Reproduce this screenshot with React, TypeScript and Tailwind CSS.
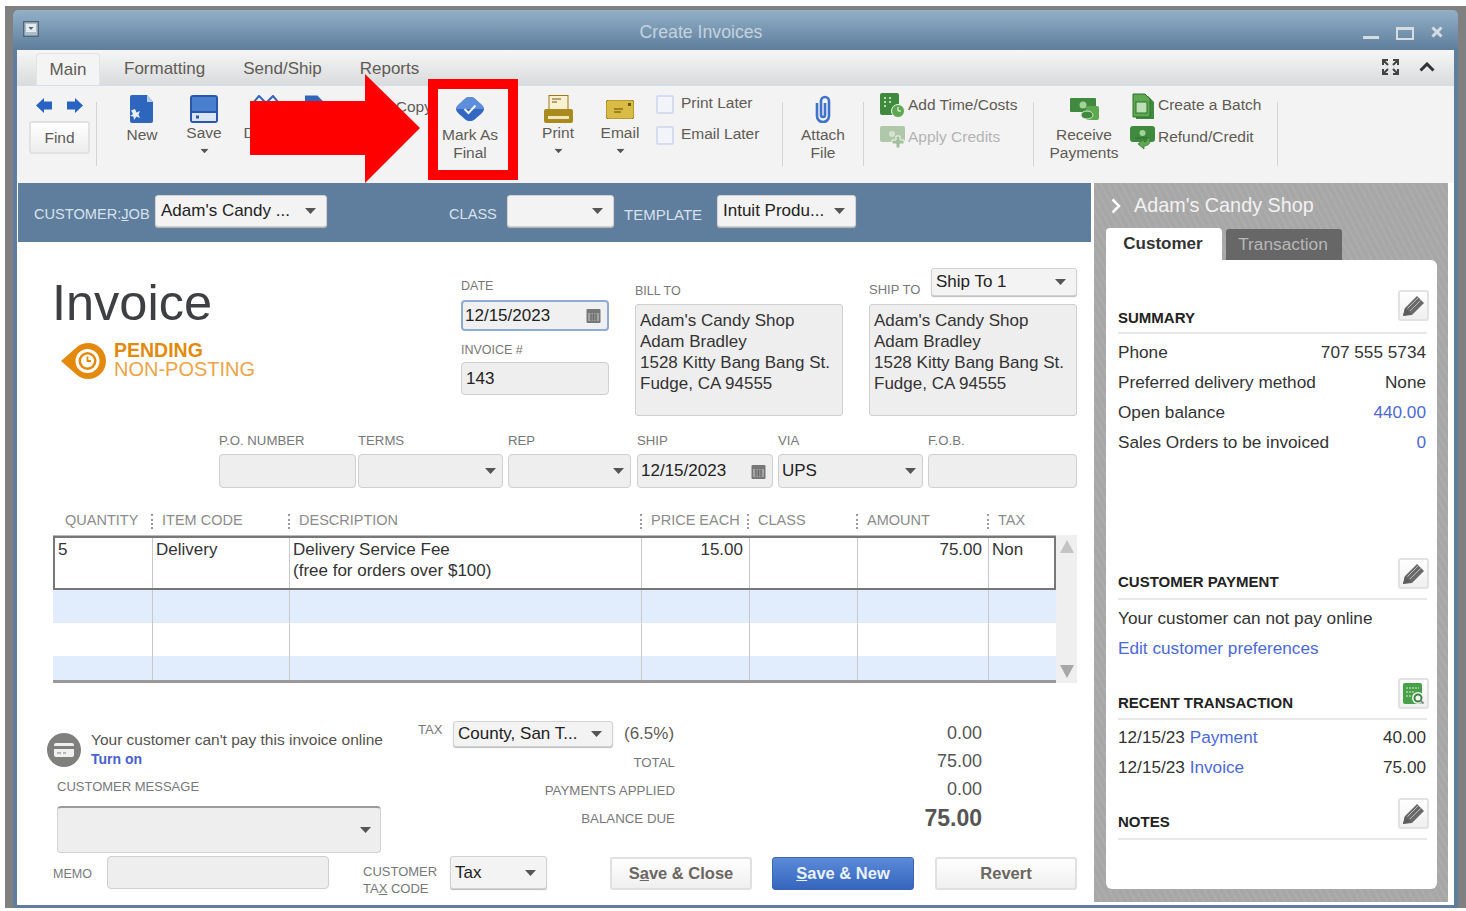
import type { ReactNode } from 'react';

function Caret({ className = '' }: { className?: string }) {
  return (
    <svg width="11" height="6" viewBox="0 0 11 6" className={className}>
      <path d="M0 0h11L5.5 6z" fill="#555" />
    </svg>
  );
}

function CalendarIcon() {
  return (
    <svg width="15" height="15" viewBox="0 0 15 15">
      <rect x="0.5" y="1" width="14" height="14" rx="1" fill="#777" />
      <rect x="2" y="5" width="11" height="8" fill="#a3a3a3" />
      <path d="M4 7h7M4 9h7M4 11h7M5 5v8M7.5 5v8M10 5v8" stroke="#666" strokeWidth="0.8" />
    </svg>
  );
}

function Pencil() {
  return (
    <svg width="24" height="23" viewBox="0 0 24 23">
      <path d="M1 22l2-8L15 2l7 7-12 12z" fill="#6a6a6a" />
      <path d="M5.5 14.5L16 4M8 17L18.5 6.5" stroke="#c4c4c4" strokeWidth="0.9" />
      <path d="M1 22l2-8 6 6z" fill="#5c5c5c" />
    </svg>
  );
}

function Select({ w, h, text, className = '', pl = 'pl-[5px]' }: { w: string; h: string; text?: string; className?: string; pl?: string }) {
  return (
    <div className={`${w} ${h} ${className} ${pl} flex items-center justify-between shrink-0 bg-[#f3f3f3] border border-[#d2d2d2] rounded-[3px] pr-[10px] text-[17px] text-[#222] shadow-[0_1px_1px_#bbb]`}>
      <span className="whitespace-nowrap">{text}</span>
      <Caret />
    </div>
  );
}

function ToolBtn({ icon, lines, w, ml, top = false, caret = false }: { icon: ReactNode; lines: string[]; w: string; ml: string; top?: boolean; caret?: boolean }) {
  return (
    <div className={`${w} ${ml} shrink-0 flex flex-col items-center pt-[9px]`}>
      <div className="h-[28px] flex items-center justify-center">{icon}</div>
      <div className={`${top ? 'mt-px' : 'mt-[3px]'} text-center leading-[18px] whitespace-nowrap`}>
        {lines.map((l) => (
          <div key={l}>{l}</div>
        ))}
      </div>
      {caret && <Caret className="mt-[6px] scale-75" />}
    </div>
  );
}

function Divider({ ml }: { ml: string }) {
  return <div className={`${ml} mt-[16px] h-[64px] w-px shrink-0 bg-[#d4d4d4]`} />;
}

function IconRow({ icon, text, dim = false }: { icon: ReactNode; text: string; dim?: boolean }) {
  return (
    <div className={`h-[26px] flex items-center gap-[3px] whitespace-nowrap ${dim ? 'text-[#b3b3b3]' : ''}`}>
      <div className="w-[25px] flex justify-center">{icon}</div>
      <span className="-mt-[2px]">{text}</span>
    </div>
  );
}

function Check({ text }: { text: string }) {
  return (
    <div className="h-[20px] flex items-center gap-[7px]">
      <div className="w-[18px] h-[19px] bg-[#f2f4fa] border-2 border-[#d5dcee] rounded-[2px]" />
      <span className="-mt-[3px]">{text}</span>
    </div>
  );
}

function Field({ label, w, ml, children }: { label: string; w: string; ml: string; children?: ReactNode }) {
  return (
    <div className={`${w} ${ml} shrink-0`}>
      <div className="h-[14px] leading-[14px] text-[13.2px] text-[#77787a]">{label}</div>
      <div className="mt-[6px] h-[34px] bg-[#eeeeee] border border-[#cfcfcf] rounded-[4px] flex items-center justify-between pl-[3px] pr-[6px] text-[17px] text-[#222]">
        {children}
      </div>
    </div>
  );
}

function HeadCell({ text, w, dots = true }: { text: string; w: string; dots?: boolean }) {
  return (
    <div className={`${w} shrink-0 flex items-center text-[14.5px] text-[#8b8b8b]`}>
      {dots && <div className="h-[15px] mr-[9px] border-l-2 border-dotted border-[#9a9a9a]" />}
      {text}
    </div>
  );
}

const cols = 'grid grid-cols-[100px_137px_352px_108px_108px_131px_67px]';

function EmptyRow({ h, bg }: { h: string; bg: string }) {
  return (
    <div className={`${cols} ${h} ${bg}`}>
      {[0, 1, 2, 3, 4, 5].map((i) => (
        <div key={i} className="border-r border-[#c9c9c9]" />
      ))}
      <div />
    </div>
  );
}

function TotalRow({ label, value, h = 'h-[28px]', big = false }: { label: string; value: string; h?: string; big?: boolean }) {
  return (
    <div className={`${h} flex items-center`}>
      <div className="w-[257px] text-right text-[13.3px] text-[#77787a] mt-[3px] whitespace-nowrap">{label}</div>
      <div className={`w-[307px] text-right text-[#555] ${big ? 'text-[23px] font-bold mt-[1px]' : 'text-[18px]'}`}>{value}</div>
    </div>
  );
}

function SideSection({ title, mt, titleMt, h, icon, children }: { title: string; mt: string; titleMt: string; h: string; icon: ReactNode; children?: ReactNode }) {
  return (
    <div className={mt}>
      <div className={`${h} flex items-start justify-between border-b-2 border-[#e8e8e8] mr-[2px]`}>
        <div className={`${titleMt} text-[15px] leading-[16px] font-bold text-[#222]`}>{title}</div>
        <div className="-mr-[2px] w-[31px] h-[31px] flex items-center justify-center rounded-[3px] border-2 border-[#e2e2e2] bg-gradient-to-b from-white to-[#efefef]">
          {icon}
        </div>
      </div>
      {children}
    </div>
  );
}

function SideRow({ children }: { children: ReactNode }) {
  return <div className="h-[30px] flex items-center justify-between pr-[3px] text-[17.2px] text-[#333]">{children}</div>;
}

const link = 'text-[#4c68d7]';

export default function App() {
  return (
    <div className="relative w-[1466px] h-[911px] bg-white overflow-hidden pt-[6px] pl-[5px] font-['Liberation_Sans',Arial,sans-serif] text-[15.5px] text-[#5f5b55]">
      <div className="h-[902px] bg-[#808080] pl-[8px] pr-[8px] pt-[4px]">
        <div className="h-[898px] rounded-t-[5px] bg-[#5f7d9c] px-[4px] pb-[3px] flex flex-col">
          {/* title bar */}
          <div className="-mx-[4px] h-[40px] shrink-0 rounded-t-[5px] bg-gradient-to-b from-[#92b0c8] to-[#5f7e9b] flex items-center pl-[10px] pr-[15px]">
            <svg width="16" height="16" viewBox="0 0 16 16" className="-mt-[2px]">
              <rect x="0.7" y="0.7" width="14.6" height="14.6" fill="#a9bccb" stroke="#4d6273" strokeWidth="1.3" />
              <rect x="3" y="3" width="10" height="8" fill="#e4eaee" />
              <path d="M5.5 6h5L8 9z" fill="#4d6273" />
            </svg>
            <div className="flex-1 text-center text-[17.7px] text-[#c4d3df] mt-[4px]">Create Invoices</div>
            <div className="w-[16px] h-[3px] bg-[#d5dde3] mt-[14px]" />
            <div className="ml-[17px] w-[18px] h-[13px] border-2 border-[#d5dde3] border-t-[3px] mt-[6px]" />
            <svg width="12" height="12" viewBox="0 0 12 12" className="ml-[17px] mt-[4px]">
              <path d="M1.5 1.5l9 9M10.5 1.5l-9 9" stroke="#d5dde3" strokeWidth="3" />
            </svg>
          </div>

          {/* ribbon tabs */}
          <div className="h-[35px] shrink-0 bg-gradient-to-b from-[#f6f6f6] to-[#d9dbdc] flex items-end pl-[19px] pr-[19px] text-[17px]">
            <div className="w-[64px] h-[32px] rounded-t-[4px] bg-[#f4f4f4] border border-b-0 border-[#e4e4e4] flex items-center justify-center">Main</div>
            <div className="ml-[24px] h-[32px] flex items-center">Formatting</div>
            <div className="ml-[38px] h-[32px] flex items-center">Send/Ship</div>
            <div className="ml-[38px] h-[32px] flex items-center">Reports</div>
            <div className="ml-auto h-[32px] flex items-center gap-[20px]">
              <svg width="17" height="16" viewBox="0 0 17 16" className="-mt-[4px]">
                <path d="M1 6V1h5M11 1h5v5M16 10v5h-5M6 15H1v-5M1 1l5 5M16 1l-5 5M16 15l-5-5M1 15l5-5" fill="none" stroke="#444" strokeWidth="2" />
              </svg>
              <svg width="16" height="10" viewBox="0 0 16 10" className="-mt-[4px]">
                <path d="M1.5 8.5L8 2l6.5 6.500" fill="none" stroke="#333" strokeWidth="3" />
              </svg>
            </div>
          </div>

          {/* toolbar */}
          <div className="h-[98px] shrink-0 bg-[#f3f3f3] border-t border-[#d3deea] flex items-start">
            <div className="ml-[12px] w-[61px] shrink-0 pt-[12px]">
              <div className="flex pl-[7px] gap-[15px] h-[16px]">
                <svg width="16" height="15" viewBox="0 0 16 15">
                  <path d="M0 7.5L8 0v3.5h8v8H8V15z" fill="#2a62c4" />
                </svg>
                <svg width="16" height="15" viewBox="0 0 16 15">
                  <path d="M16 7.5L8 0v3.5H0v8h8V15z" fill="#2a62c4" />
                </svg>
              </div>
              <div className="mt-[7px] h-[33px] rounded-[3px] border-2 border-[#e2e2e2] bg-gradient-to-b from-white to-[#ededed] flex items-center justify-center">Find</div>
            </div>
            <Divider ml="ml-[6px]" />
            <ToolBtn
              w="w-[50px]"
              ml="ml-[20px]"
              lines={['New']}
              icon={
                <svg width="24" height="28" viewBox="0 0 24 28">
                  <path d="M2 0h15l6 7v19a2 2 0 0 1-2 2H2a2 2 0 0 1-2-2V2a2 2 0 0 1 2-2z" fill="#2f66bd" />
                  <path d="M17 0l6 7h-6z" fill="#b5cdf0" />
                  <path d="M5 14l1.5 3.5L10 16l-1.5 3.5L10 23l-3.5-1.5L4 25l-.5-3.5L0 21l3-2-2-3.5z" fill="#e7f0fb" />
                </svg>
              }
            />
            <ToolBtn
              w="w-[50px]"
              ml="ml-[12px]"
              top
              caret
              lines={['Save']}
              icon={
                <svg width="28" height="28" viewBox="0 0 28 28">
                  <rect width="28" height="28" rx="3" fill="#2a58a8" />
                  <rect x="2" y="2" width="24" height="14" fill="#4a7fd0" />
                  <rect x="2" y="18" width="24" height="8" fill="#dbe6f5" />
                  <rect x="6" y="20.5" width="3" height="3" fill="#2a58a8" />
                </svg>
              }
            />
            <ToolBtn
              w="w-[50px]"
              ml="ml-[12px]"
              top
              lines={['Delete']}
              icon={
                <svg width="28" height="28" viewBox="0 0 28 28">
                  <path d="M1 8l6-7 7 7 7-7 6 7-6 8-7-6-7 6z" fill="none" stroke="#2f66bd" strokeWidth="2" />
                </svg>
              }
            />
            <div className="w-[129px] ml-[12px] shrink-0 pt-[9px] flex items-start gap-[8px]">
              <svg width="22" height="24" viewBox="0 0 22 24">
                <path d="M2 0h13l6 6v18H2z" fill="#2f66bd" />
              </svg>
              <span className="whitespace-nowrap">Create a Copy</span>
            </div>
            <ToolBtn
              w="w-[60px]"
              ml="ml-[8px]"
              lines={['Mark As', 'Final']}
              icon={
                <svg width="28" height="24" viewBox="0 0 28 24">
                  <path d="M14 0c4 0 5 2 8 4.5 3 2.5 6 5 6 7.5s-3 5-6 7.5S18 24 14 24s-5-2-8-4.5S0 14.5 0 12s3-5 6-7.5S10 0 14 0z" fill="#3268c2" />
                  <path d="M14 0c4 0 5 2 8 4.5 3 2.5 6 5 6 7.5H0c0-2.500 3-5 6-7.5S10 0 14 0z" fill="#5d8ddb" />
                  <path d="M8.5 12l4 4 7-7.5" fill="none" stroke="#f0f5fc" strokeWidth="2" />
                </svg>
              }
            />
            <ToolBtn
              w="w-[40px]"
              ml="ml-[38px]"
              top
              caret
              lines={['Print']}
              icon={
                <svg width="29" height="28" viewBox="0 0 29 28">
                  <rect x="5" y="0.5" width="19" height="14" fill="#f8f0cf" stroke="#9a7a1c" />
                  <path d="M8 4h9M8 7h5" stroke="#9a8b50" strokeWidth="1.5" />
                  <path d="M2 14h25a2 2 0 0 1 2 2v10a2 2 0 0 1-2 2H2a2 2 0 0 1-2-2V16a2 2 0 0 1 2-2z" fill="#a98a1f" />
                  <rect x="4" y="21" width="21" height="3" fill="#f1e7bd" />
                </svg>
              }
            />
            <ToolBtn
              w="w-[44px]"
              ml="ml-[20px]"
              top
              caret
              lines={['Email']}
              icon={
                <svg width="28" height="19" viewBox="0 0 28 19">
                  <rect width="28" height="19" rx="3" fill="#d8bc45" stroke="#9a7a1c" />
                  <path d="M8 9h9M8 12h7" stroke="#8a6d15" strokeWidth="1.3" />
                  <rect x="22" y="3" width="3" height="3" fill="#6a5210" />
                </svg>
              }
            />
            <div className="w-[120px] ml-[14px] shrink-0 pt-[8px] flex flex-col gap-[11px]">
              <Check text="Print Later" />
              <Check text="Email Later" />
            </div>
            <Divider ml="ml-[6px]" />
            <ToolBtn
              w="w-[50px]"
              ml="ml-[15px]"
              lines={['Attach', 'File']}
              icon={
                <svg width="18" height="28" viewBox="0 0 18 28">
                  <path d="M3 8v13a6 6 0 0 0 12 0V6a4 4 0 0 0-8 0v14a2 2 0 0 0 4 0V8" fill="none" stroke="#3f72c9" strokeWidth="2.6" />
                </svg>
              }
            />
            <Divider ml="ml-[15px]" />
            <div className="w-[145px] ml-[16px] shrink-0 pt-[7px] flex flex-col gap-[6px]">
              <IconRow
                text="Add Time/Costs"
                icon={
                  <svg width="25" height="26" viewBox="0 0 25 26">
                    <rect width="19" height="22" rx="2" fill="#3f8a3f" />
                    <path d="M4 5h2M4 9h2M4 13h2M9 5h2M9 9h2" stroke="#b9dcb0" strokeWidth="2" />
                    <circle cx="18" cy="18" r="6.5" fill="#5ea94f" stroke="#f3f3f3" />
                    <path d="M18 14v4h3" stroke="#fff" fill="none" />
                  </svg>
                }
              />
              <IconRow
                dim
                text="Apply Credits"
                icon={
                  <svg width="25" height="25" viewBox="0 0 25 25">
                    <rect width="25" height="16" rx="2" fill="#b0c8aa" />
                    <circle cx="12" cy="8" r="3" fill="#d4e3cf" />
                    <path d="M12 14h4v-4h4v4h4v4h-4v4h-4v-4h-4z" fill="#a3c09c" stroke="#f3f3f3" />
                  </svg>
                }
              />
            </div>
            <Divider ml="ml-[8px]" />
            <ToolBtn
              w="w-[80px]"
              ml="ml-[10px]"
              lines={['Receive', 'Payments']}
              icon={
                <svg width="29" height="24" viewBox="0 0 29 24">
                  <rect y="1" width="26" height="14" rx="1" fill="#3f8a3f" />
                  <circle cx="13" cy="8" r="3.5" fill="#a4d398" />
                  <rect x="16" y="9" width="13" height="14" rx="2" fill="#5ea94f" />
                  <ellipse cx="17" cy="18" rx="6" ry="4" fill="#3f8a3f" stroke="#d8ecd2" />
                </svg>
              }
            />
            <div className="w-[140px] ml-[6px] shrink-0 pt-[7px] flex flex-col gap-[6px]">
              <IconRow
                text="Create a Batch"
                icon={
                  <svg width="23" height="26" viewBox="0 0 23 26">
                    <path d="M5 3h12l6 6v17H5z" fill="#3f8a3f" />
                    <path d="M2 1h12l5 5v18H2z" fill="#5ea94f" stroke="#2f7030" />
                    <rect x="5" y="9" width="11" height="11" fill="#bddfb4" stroke="#2f7030" />
                  </svg>
                }
              />
              <IconRow
                text="Refund/Credit"
                icon={
                  <svg width="25" height="24" viewBox="0 0 25 24">
                    <rect width="25" height="16" rx="3" fill="#3f8a3f" />
                    <circle cx="12.5" cy="7" r="3" fill="#a4d398" />
                    <path d="M5 12h15v3c0 4-4 5-6 5v3l-6-5 6-5v3c2 0 3-1 3-2v-2z" fill="#5ea94f" stroke="#2f7030" strokeWidth="0.7" />
                  </svg>
                }
              />
            </div>
            <Divider ml="ml-[7px]" />
          </div>

          {/* body */}
          <div className="h-[722px] shrink-0 bg-white flex">
            <div className="ml-px w-[1073px] shrink-0">
              <div className="h-[59px] bg-[#5f7d9c] flex items-center pl-[16px] text-[14.6px] text-[#d8e2ec]">
                <span className="w-[116px] mt-[5px] whitespace-nowrap">
                  CUSTOMER:<span className="underline">J</span>OB
                </span>
                <Select w="w-[172px]" h="h-[32px]" text="Adam's Candy ..." className="ml-[5px] -mt-[4px]" />
                <span className="ml-[122px] w-[48px] mt-[5px]">CLASS</span>
                <Select w="w-[107px]" h="h-[32px]" className="ml-[10px] -mt-[4px]" />
                <span className="ml-[10px] w-[79px] mt-[5px] text-[15px]">TEMPLATE</span>
                <Select w="w-[139px]" h="h-[32px]" text="Intuit Produ..." className="ml-[14px] -mt-[4px]" />
              </div>

              <div className="pt-[26px] flex">
                <div className="ml-[34px] w-[409px] shrink-0">
                  <div className="mt-[8px] text-[50.5px] leading-[54px] text-[#3d3f42]">Invoice</div>
                  <div className="mt-[13px] ml-[9px] flex items-center">
                    <svg width="45" height="36" viewBox="0 0 45 36">
                      <path d="M0 18L16 4a18 18 0 0 1 11-4 18 18 0 0 1 0 36 18 18 0 0 1-11-4z" fill="#e38a0c" />
                      <circle cx="26.5" cy="18" r="12" fill="#fff" />
                      <circle cx="26.5" cy="18" r="9" fill="#e38a0c" />
                      <circle cx="26.5" cy="18" r="6.5" fill="#fff" />
                      <path d="M26.5 13.5V18h3.5" stroke="#e38a0c" strokeWidth="1.8" fill="none" />
                    </svg>
                    <div className="ml-[8px] text-[20px] leading-[19px] -mt-[3px]">
                      <div className="font-bold text-[#e38a0c] text-[19.5px]">PENDING</div>
                      <div className="text-[#eda447]">NON-POSTING</div>
                    </div>
                  </div>
                </div>
                <div className="w-[148px] shrink-0 text-[12.5px] text-[#77787a]">
                  <div className="mt-[11px] h-[14px] leading-[14px]">DATE</div>
                  <div className="mt-[7px] h-[31px] bg-[#f0f0f0] border-2 border-[#8faad6] rounded-[4px] flex items-center justify-between pl-[2px] pr-[6px] text-[17px] text-[#222]">
                    12/15/2023
                    <CalendarIcon />
                  </div>
                  <div className="mt-[12px] h-[14px] leading-[14px]">INVOICE #</div>
                  <div className="mt-[5px] h-[33px] bg-[#eeeeee] border border-[#cfcfcf] rounded-[4px] flex items-center pl-[4px] text-[17px] text-[#222]">143</div>
                </div>
                <div className="ml-[26px] w-[208px] shrink-0">
                  <div className="mt-[16px] h-[14px] leading-[14px] text-[12.5px] text-[#77787a]">BILL TO</div>
                  <div className="mt-[6px] h-[112px] bg-[#eeeeee] border border-[#cfcfcf] rounded-[3px] pl-[4px] pt-[5px] leading-[21px] text-[17px] text-[#333] whitespace-nowrap">
                    Adam's Candy Shop
                    <br />
                    Adam Bradley
                    <br />
                    1528 Kitty Bang Bang St.
                    <br />
                    Fudge, CA 94555
                  </div>
                </div>
                <div className="ml-[26px] w-[208px] shrink-0">
                  <div className="h-[28px] flex items-end justify-between">
                    <span className="h-[12px] leading-[12px] text-[13px] text-[#77787a]">SHIP TO</span>
                    <Select w="w-[146px]" h="h-[28px]" text="Ship To 1" pl="pl-[4px]" />
                  </div>
                  <div className="mt-[8px] h-[112px] bg-[#eeeeee] border border-[#cfcfcf] rounded-[3px] pl-[4px] pt-[5px] leading-[21px] text-[17px] text-[#333] whitespace-nowrap">
                    Adam's Candy Shop
                    <br />
                    Adam Bradley
                    <br />
                    1528 Kitty Bang Bang St.
                    <br />
                    Fudge, CA 94555
                  </div>
                </div>
              </div>

              <div className="mt-[18px] flex">
                <Field label="P.O. NUMBER" w="w-[137px]" ml="ml-[201px]" />
                <Field label="TERMS" w="w-[145px]" ml="ml-[2px]">
                  <span />
                  <Caret />
                </Field>
                <Field label="REP" w="w-[123px]" ml="ml-[5px]">
                  <span />
                  <Caret />
                </Field>
                <Field label="SHIP" w="w-[136px]" ml="ml-[6px]">
                  12/15/2023
                  <CalendarIcon />
                </Field>
                <Field label="VIA" w="w-[145px]" ml="ml-[5px]">
                  UPS
                  <Caret />
                </Field>
                <Field label="F.O.B." w="w-[149px]" ml="ml-[5px]" />
              </div>

              <div className="mt-[25px] ml-[47px] h-[16px] flex items-center">
                <HeadCell text="QUANTITY" w="w-[86px]" dots={false} />
                <HeadCell text="ITEM CODE" w="w-[137px]" />
                <HeadCell text="DESCRIPTION" w="w-[352px]" />
                <HeadCell text="PRICE EACH" w="w-[107px]" />
                <HeadCell text="CLASS" w="w-[109px]" />
                <HeadCell text="AMOUNT" w="w-[131px]" />
                <HeadCell text="TAX" w="w-[60px]" />
              </div>

              <div className="mt-[6px] ml-[35px] flex">
                <div className="w-[1003px] h-[148px] border-b-[3px] border-[#999] border-t border-t-[#bbb]">
                  <div className={`${cols} h-[54px] outline-2 -outline-offset-2 outline-[#777] text-[17px] leading-[21px] text-[#333]`}>
                    <div className="border-r border-[#c9c9c9] pl-[5px] pt-[3px]">5</div>
                    <div className="border-r border-[#c9c9c9] pl-[3px] pt-[3px]">Delivery</div>
                    <div className="border-r border-[#c9c9c9] pl-[3px] pt-[3px] whitespace-nowrap">
                      Delivery Service Fee
                      <br />
                      (free for orders over $100)
                    </div>
                    <div className="border-r border-[#c9c9c9] pr-[6px] pt-[3px] text-right">15.00</div>
                    <div className="border-r border-[#c9c9c9]" />
                    <div className="border-r border-[#c9c9c9] pr-[6px] pt-[3px] text-right">75.00</div>
                    <div className="pl-[3px] pt-[3px]">Non</div>
                  </div>
                  <EmptyRow h="h-[33px]" bg="bg-[#e1edfc]" />
                  <EmptyRow h="h-[33px]" bg="bg-white" />
                  <EmptyRow h="h-[24px]" bg="bg-[#e1edfc]" />
                </div>
                <div className="w-[21px] h-[148px] bg-[#efefef] flex flex-col items-center justify-between py-[5px]">
                  <svg width="14" height="13" viewBox="0 0 14 13">
                    <path d="M7 0l7 13H0z" fill="#c4c4c4" />
                  </svg>
                  <svg width="14" height="13" viewBox="0 0 14 13">
                    <path d="M0 0h14L7 13z" fill="#a8a8a8" />
                  </svg>
                </div>
              </div>

              {/* totals + message */}
              <div className="mt-[38px] h-[135px] flex">
                <div className="ml-[29px] w-[371px] shrink-0">
                  <div className="mt-[12px] flex items-start">
                    <svg width="34" height="34" viewBox="0 0 34 34" className="shrink-0">
                      <circle cx="17" cy="17" r="17" fill="#7f7f7b" />
                      <rect x="7" y="10" width="20" height="14" rx="2" fill="#f0f0f0" />
                      <rect x="7" y="13" width="20" height="3" fill="#7f7f7b" />
                      <path d="M10 20h4M16 20h3" stroke="#7f7f7b" />
                    </svg>
                    <div className="ml-[10px] whitespace-nowrap">
                      <div className="text-[15.5px] leading-[16px] text-[#55524e] -mt-[1px]">Your customer can't pay this invoice online</div>
                      <div className="mt-[4px] text-[14px] leading-[15px] font-bold text-[#4a5fd0]">Turn on</div>
                    </div>
                  </div>
                  <div className="mt-[12px] ml-[10px] h-[16px] leading-[16px] text-[13px] text-[#77787a]">CUSTOMER MESSAGE</div>
                  <div className="mt-[11px] ml-[10px] w-[324px] h-[47px] bg-[#eeeeee] border border-[#d2d2d2] border-t-2 border-t-[#9b9b9b] rounded-[4px] flex items-center justify-end pr-[9px]">
                    <Caret />
                  </div>
                </div>
                <div className="shrink-0">
                  <div className="h-[26px] flex items-center">
                    <span className="w-[35px] text-[13px] text-[#77787a] -mt-[9px]">TAX</span>
                    <Select w="w-[160px]" h="h-[26px]" text="County, San T..." pl="pl-[4px]" />
                    <span className="ml-[11px] w-[52px] text-[#5f5b55] text-[17px] whitespace-nowrap">(6.5%)</span>
                    <span className="w-[306px] text-right text-[18px] text-[#555] -mt-[2px]">0.00</span>
                  </div>
                  <TotalRow label="TOTAL" value="75.00" />
                  <TotalRow label="PAYMENTS APPLIED" value="0.00" />
                  <TotalRow label="BALANCE DUE" value="75.00" h="h-[29px]" big />
                </div>
              </div>

              <div className="h-[34px] flex items-start">
                <span className="ml-[35px] w-[54px] mt-[9px] text-[12.5px] text-[#77787a]">MEMO</span>
                <div className="w-[222px] h-[33px] bg-[#eeeeee] border border-[#cfcfcf] rounded-[4px]" />
                <div className="ml-[34px] w-[87px] mt-[7px] text-[13px] leading-[17px] text-[#77787a] whitespace-nowrap">
                  CUSTOMER
                  <br />
                  TA<span className="underline">X</span> CODE
                </div>
                <Select w="w-[97px]" h="h-[33px]" text="Tax" pl="pl-[4px]" />
                <div className="ml-[63px] mt-px w-[142px] h-[33px] rounded-[3px] border-2 border-[#e0e0e0] bg-gradient-to-b from-white to-[#efefef] flex items-center justify-center text-[16.5px] font-bold text-[#6b6760]">
                  <span>
                    S<span className="underline">a</span>ve &amp; Close
                  </span>
                </div>
                <div className="ml-[20px] mt-px w-[142px] h-[33px] rounded-[3px] border border-[#3a66b5] bg-gradient-to-b from-[#5b8ad8] to-[#3566bd] flex items-center justify-center text-[16.5px] font-bold text-[#eaf1fb]">
                  <span>
                    <span className="underline">S</span>ave &amp; New
                  </span>
                </div>
                <div className="ml-[21px] mt-px w-[142px] h-[33px] rounded-[3px] border-2 border-[#e0e0e0] bg-gradient-to-b from-white to-[#efefef] flex items-center justify-center text-[16.5px] font-bold text-[#6b6760]">Revert</div>
              </div>
            </div>

            {/* customer panel */}
            <div className="ml-[3px] w-[354px] h-[719px] shrink-0 bg-[#a9a9a9] bg-[repeating-linear-gradient(62deg,#acacac_0_2px,#a7a7a7_2px_6px)] px-[12px]">
              <div className="h-[45px] flex items-center text-white">
                <svg width="10" height="16" viewBox="0 0 10 16" className="ml-[5px] mt-[1px]">
                  <path d="M1.5 1.5L8 8l-6.5 6.5" fill="none" stroke="#fff" strokeWidth="2.5" />
                </svg>
                <span className="ml-[13px] mt-[1px] text-[19.8px] text-[#f2f2f2]">Adam's Candy Shop</span>
              </div>
              <div className="h-[32px] flex items-end">
                <div className="w-[116px] h-[32px] bg-white rounded-t-[4px] flex items-center justify-center pr-[2px] text-[17px] font-bold text-[#333]">Customer</div>
                <div className="ml-[4px] w-[116px] h-[31px] bg-[#676767] rounded-t-[3px] flex items-center justify-center pr-[2px] text-[17.3px] text-[#b8b8b8]">Transaction</div>
              </div>
              <div className="w-[331px] h-[629px] bg-white rounded-b-[6px] rounded-tr-[6px] pl-[12px] pr-[8px]">
                <SideSection title="SUMMARY" mt="pt-[30px]" titleMt="mt-[20px]" h="h-[44px]" icon={<Pencil />}>
                  <div className="mt-[4px]">
                    <SideRow>
                      <span>Phone</span>
                      <span>707 555 5734</span>
                    </SideRow>
                    <SideRow>
                      <span>Preferred delivery method</span>
                      <span>None</span>
                    </SideRow>
                    <SideRow>
                      <span>Open balance</span>
                      <span className={link}>440.00</span>
                    </SideRow>
                    <SideRow>
                      <span>Sales Orders to be invoiced</span>
                      <span className={link}>0</span>
                    </SideRow>
                  </div>
                </SideSection>
                <SideSection title="CUSTOMER PAYMENT" mt="mt-[100px]" titleMt="mt-[16px]" h="h-[42px]" icon={<Pencil />}>
                  <div className="mt-[4px]">
                    <SideRow>
                      <span>Your customer can not pay online</span>
                    </SideRow>
                    <SideRow>
                      <span className={link}>Edit customer preferences</span>
                    </SideRow>
                  </div>
                </SideSection>
                <SideSection
                  title="RECENT TRANSACTION"
                  mt="mt-[14px]"
                  titleMt="mt-[17px]"
                  h="h-[42px]"
                  icon={
                    <svg width="24" height="24" viewBox="0 0 24 24">
                      <rect x="1" y="1" width="19" height="21" rx="2" fill="#49a04a" />
                      <path d="M4 6h13M4 10h8M4 14h6" stroke="#a8d8a0" strokeWidth="1.5" strokeDasharray="2 1" />
                      <circle cx="16" cy="16" r="6" fill="#f4f4f4" />
                      <circle cx="16" cy="16" r="3.5" fill="none" stroke="#3f8a3f" strokeWidth="2" />
                      <path d="M18.5 18.5l3 3" stroke="#888" strokeWidth="2" />
                    </svg>
                  }
                >
                  <div className="mt-[3px]">
                    <SideRow>
                      <span>
                        12/15/23 <span className={link}>Payment</span>
                      </span>
                      <span>40.00</span>
                    </SideRow>
                    <SideRow>
                      <span>
                        12/15/23 <span className={link}>Invoice</span>
                      </span>
                      <span>75.00</span>
                    </SideRow>
                  </div>
                </SideSection>
                <SideSection title="NOTES" mt="mt-[15px]" titleMt="mt-[16px]" h="h-[42px]" icon={<Pencil />} />
              </div>
            </div>
          </div>
        </div>
      </div>

      {/* callout on top of the ribbon */}
      <svg width="171" height="110" viewBox="0 0 171 110" className="absolute left-[250px] top-[74px]">
        <path d="M0 27h115V0l55 54-55 55V81H0z" fill="#ff0000" />
      </svg>
      <div className="absolute left-[428px] top-[79px] w-[90px] h-[101px] border-[10px] border-[#ff0000]" />
    </div>
  );
}
